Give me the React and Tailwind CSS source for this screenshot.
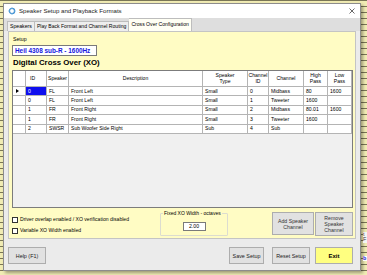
import React from 'react';

const COLS = 'grid grid-cols-[13px_21px_22px_134px_45px_21px_35px_24px_24px]';

const ROWS = [
  { id: '0', spk: 'FL', desc: 'Front Left', type: 'Small', ch: '0', chan: 'Midbass', hp: '80', lp: '1600', current: true },
  { id: '0', spk: 'FL', desc: 'Front Left', type: 'Small', ch: '1', chan: 'Tweeter', hp: '1600', lp: '' },
  { id: '1', spk: 'FR', desc: 'Front Right', type: 'Small', ch: '2', chan: 'Midbass', hp: '80.01', lp: '1600' },
  { id: '1', spk: 'FR', desc: 'Front Right', type: 'Small', ch: '3', chan: 'Tweeter', hp: '1600', lp: '' },
  { id: '2', spk: 'SWSR', desc: 'Sub Woofer Side Right', type: 'Sub', ch: '4', chan: 'Sub', hp: '', lp: '' },
];

const HEADERS = [
  { label: '', align: '' },
  { label: 'ID', align: 'justify-start pl-[4px]' },
  { label: 'Speaker', align: 'justify-center' },
  { label: 'Description', align: 'justify-center' },
  { label: 'Speaker\nType', align: 'justify-center' },
  { label: 'Channel\nID', align: 'justify-center' },
  { label: 'Channel', align: 'justify-center' },
  { label: 'High\nPass', align: 'justify-center' },
  { label: 'Low\nPass', align: 'justify-center' },
];

const Cell = ({ children, selected = false, className = '' }) => (
  <div
    className={`h-[9.4px] flex items-center pl-[2px] border-r border-b border-[#b4b4b4] leading-none whitespace-nowrap overflow-hidden ${
      selected ? 'bg-[#0f0fee] text-white' : 'bg-white'
    } ${className}`}
  >
    {children}
  </div>
);

const Button = ({ children, className = '' }) => (
  <div className={`flex items-center justify-center text-center leading-[6px] border border-[#adadad] ${className}`}>
    {children}
  </div>
);

const App = () => {
  return (
    <div
      className="w-[367px] h-[275px] overflow-hidden flex bg-[#f1ecb4] [background-image:repeating-linear-gradient(180deg,#7a7656_0px,#7a7656_1px,transparent_1px,transparent_6px)] text-black"
      style={{ fontFamily: '"Liberation Sans", Arial, sans-serif' }}
    >
      <div className="w-[3px] shrink-0" />

      <div className="mt-[3px] w-[358px] h-[268px] shrink-0 flex flex-col bg-[#ebebeb] border border-[#8c8c8c] shadow-[2px_2px_3px_rgba(0,0,0,0.35)]">
        {/* title bar */}
        <div className="h-[14px] shrink-0 bg-white flex items-center pl-[4px] pr-[4px]">
          <svg width="8" height="8" viewBox="0 0 8 8" className="shrink-0">
            <circle cx="4" cy="4" r="2.6" fill="none" stroke="#3f8fd0" strokeWidth="1.3" />
            <path d="M4 0.5 L4 2 M4 6 L4 7.5 M0.5 4 L2 4 M6 4 L7.5 4" stroke="#6fb0e0" strokeWidth="1" />
          </svg>
          <span className="ml-[3px] text-[6.1px] text-[#222]">Speaker Setup and Playback Formats</span>
          <svg width="6" height="6" viewBox="0 0 6 6" className="ml-auto mr-[1px]">
            <path d="M0.5 0.5 L5.5 5.5 M5.5 0.5 L0.5 5.5" stroke="#444" strokeWidth="0.8" />
          </svg>
        </div>

        {/* tabs */}
        <div className="h-[13px] shrink-0 bg-[#dedede] flex items-end pl-[3px]">
          <div className="h-[10px] px-[2px] flex items-center border border-b-0 border-[#bdbdbd] bg-[#eeeeee] text-[5.2px] leading-none">Speakers</div>
          <div className="h-[10px] px-[2px] flex items-center border border-l-0 border-b-0 border-[#bdbdbd] bg-[#eeeeee] text-[5.1px] leading-none">Play Back Format and Channel Routing</div>
          <div className="h-[13px] px-[2px] flex items-center border border-l-0 border-b-0 border-[#bdbdbd] bg-[#fffff4] text-[5.1px] leading-none">Cross Over Configuration</div>
        </div>

        {/* tab panel */}
        <div className="mx-[4px] h-[208px] shrink-0 bg-[#fffcc4] border border-[#c4c4c4] pl-[3px] pt-[5px] flex flex-col">
          <div className="text-[5.2px] leading-none ml-[1px]">Setup</div>
          <div className="mt-[3px] w-[85px] h-[11px] bg-white border border-[#7a7a7a] flex items-center pl-[2px] text-[6.4px] font-bold text-[#1616e0] leading-none">
            Heil 4308 sub-R - 1600Hz
          </div>
          <div className="mt-[3px] ml-[1px] text-[7.8px] font-bold leading-none">Digital Cross Over (XO)</div>

          {/* data grid */}
          <div className="mt-[3px] w-[341px] h-[138px] bg-[#f0f0f0] border border-[#7c7c7c] text-[5.1px] flex flex-col">
            <div className={COLS}>
              {HEADERS.map((h, i) => (
                <div
                  key={i}
                  className={`h-[16px] flex items-center text-center whitespace-pre-line leading-[5.4px] bg-white border-r border-b border-[#b4b4b4] ${h.align}`}
                >
                  {h.label}
                </div>
              ))}
            </div>
            {ROWS.map((r, i) => (
              <div key={i} className={COLS}>
                <Cell className="pl-[3px]">
                  {r.current && (
                    <svg width="3" height="4" viewBox="0 0 3 4">
                      <path d="M0 0 L3 2 L0 4 Z" fill="#000" />
                    </svg>
                  )}
                </Cell>
                <Cell selected={r.current}>{r.id}</Cell>
                <Cell>{r.spk}</Cell>
                <Cell>{r.desc}</Cell>
                <Cell>{r.type}</Cell>
                <Cell>{r.ch}</Cell>
                <Cell>{r.chan}</Cell>
                <Cell>{r.hp}</Cell>
                <Cell>{r.lp}</Cell>
              </div>
            ))}
          </div>

          {/* bottom controls */}
          <div className="mt-[4px] flex items-start">
            <div className="w-[148px] pt-[5px] flex flex-col gap-[5px] text-[5.1px] leading-none">
              <div className="flex items-center gap-[2px]">
                <div className="w-[6px] h-[6px] border border-[#333] bg-white" />
                <span>Driver overlap enabled / XO verification disabled</span>
              </div>
              <div className="flex items-center gap-[2px]">
                <div className="w-[6px] h-[6px] border border-[#333] bg-white" />
                <span>Variable XO Width enabled</span>
              </div>
            </div>

            <div className="w-[68px] h-[23px] mt-[1px] border border-[#dcdcd0] rounded-[1px] relative flex justify-center pt-[8px]">
              <span className="absolute -top-[3px] left-[2px] px-[1px] bg-[#fffcc4] text-[5px] leading-none">Fixed XO Width - octaves</span>
              <div className="w-[23px] h-[9px] bg-white border border-[#7a7a7a] flex items-center justify-center text-[5.2px] leading-none">2.00</div>
            </div>

            <Button className="ml-[44px] w-[42px] h-[23px] bg-[#e1e1e1] text-[5.2px] text-[#333]">Add Speaker<br />Channel</Button>
            <Button className="ml-[1px] w-[38px] h-[24px] bg-[#e1e1e1] text-[5.2px] text-[#333]">Remove<br />Speaker<br />Channel</Button>
          </div>
        </div>

        {/* dialog buttons */}
        <div className="flex items-start pt-[8px] px-[4px]">
          <Button className="w-[38px] h-[17px] bg-[#e1e1e1] text-[5.4px] text-[#222]">Help (F1)</Button>
          <Button className="ml-auto w-[35px] h-[17px] bg-[#e1e1e1] text-[5.4px] text-[#222]">Save Setup</Button>
          <Button className="ml-[8px] w-[38px] h-[17px] bg-[#e1e1e1] text-[5.4px] text-[#222]">Reset Setup</Button>
          <Button className="ml-[5px] w-[38px] h-[17px] bg-[#ffff80] text-[6px] font-bold">Exit</Button>
          <div className="w-[3px]" />
        </div>
      </div>

      <div className="flex-1 flex flex-col pt-[232px] pl-[2px] text-[5.4px] leading-none">
        <span className="bg-[#f4f4f4] text-[#333]">t F</span>
        <span className="mt-[13px] font-bold text-[#1a1ad0] bg-white">b</span>
      </div>
    </div>
  );
};

export default App;
